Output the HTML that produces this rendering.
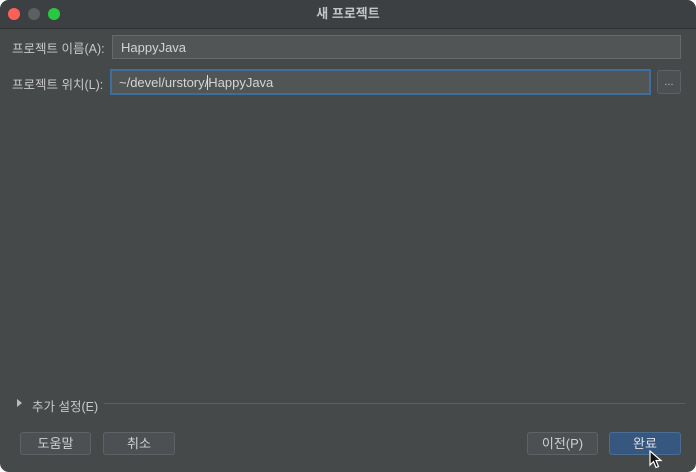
<!DOCTYPE html>
<html><head><meta charset="utf-8"><style>
body{margin:0;width:696px;height:472px;background:#fff;overflow:hidden;font-family:"Liberation Sans","Noto Sans CJK KR",sans-serif;}
.win{position:absolute;left:0;top:0;width:696px;height:472px;background:#45494a;border-radius:9px;overflow:hidden;}
.title{position:absolute;left:0;top:0;width:696px;height:28px;background:#3d4042;border-bottom:1px solid #2f3133;color:#c5c5c5;font-size:13px;font-weight:bold;text-align:center;line-height:28px;}
.dot{position:absolute;top:8px;width:12px;height:12px;border-radius:50%;}
.lbl{position:absolute;color:#c8c8c8;font-size:12.5px;}
.f{position:absolute;background:#515556;box-sizing:border-box;color:#d4d4d4;font-size:13px;padding-left:8px;}
.btn{position:absolute;top:432px;height:23px;box-sizing:border-box;border:1px solid #5e6264;border-radius:3px;background:#4c5052;color:#cfcfcf;font-size:13px;text-align:center;line-height:21px;}
</style></head><body><div class="win">
<div class="title">새 프로젝트</div>
<div class="dot" style="left:8px;background:#fe5f57"></div>
<div class="dot" style="left:28px;background:#5d5f61"></div>
<div class="dot" style="left:48px;background:#28c840"></div>
<div class="lbl" style="left:12px;top:38px">프로젝트 이름(A):</div>
<div class="f" style="left:112px;top:35px;width:569px;height:24px;border:1px solid #65696b;line-height:23px">HappyJava</div>
<div class="lbl" style="left:12px;top:74px">프로젝트 위치(L):</div>
<div class="f" style="left:110px;top:69px;width:541px;height:26px;border:2px solid #3d6e9c;line-height:23px;padding-left:7px">~/devel/urstory/<span style="border-left:1px solid #ddd;margin-left:-1px"></span>HappyJava</div>
<div class="f" style="left:657px;top:70px;width:24px;height:24px;border:1px solid #5e6264;border-radius:3px;background:#4c5052;padding:0;text-align:center;line-height:22px;color:#bbb;font-size:11px">...</div>
<div style="position:absolute;left:17px;top:399px;width:0;height:0;border-top:4px solid transparent;border-bottom:4px solid transparent;border-left:5px solid #bbb"></div>
<div class="lbl" style="left:32px;top:396px">추가 설정(E)</div>
<div style="position:absolute;left:104px;top:403px;width:581px;height:1px;background:#5a5e60"></div>
<div class="btn" style="left:20px;width:71px">도움말</div>
<div class="btn" style="left:103px;width:72px">취소</div>
<div class="btn" style="left:527px;width:71px">이전(P)</div>
<div class="btn" style="left:609px;width:72px;background:#365880;border-color:#4a6d94;color:#e0e0e0">완료</div>
<svg style="position:absolute;left:649px;top:450px" width="14" height="20" viewBox="0 0 14 20"><path d="M1 1 L1 15 L4.5 11.5 L7 17.5 L9.5 16.5 L7 10.5 L12 10.5 Z" fill="#111" stroke="#fff" stroke-width="1.2"/></svg>
</div></body></html>
